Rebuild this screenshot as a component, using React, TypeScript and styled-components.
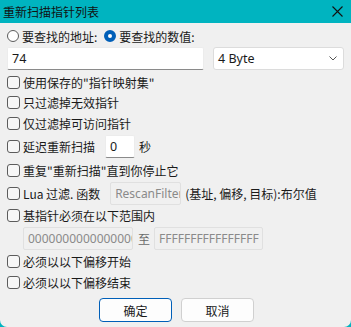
import styled, { createGlobalStyle } from "styled-components";

const GlobalStyle = createGlobalStyle`
  html, body {
    margin: 0;
    padding: 0;
    background: #00b4c0;
  }
  body {
    font-family: "Noto Sans CJK SC", "Noto Sans", sans-serif;
    font-size: 12px;
    color: #1a1a1a;
  }
`;

const Window = styled.div`
  width: 351px;
  height: 327px;
  display: flex;
  flex-direction: column;
  overflow: hidden;
`;

const TitleBar = styled.div`
  height: 23px;
  flex: none;
  display: flex;
  align-items: center;
  justify-content: space-between;
  padding: 0 6px 0 3px;
  background: #00b4c0;
  color: #111;
  font-size: 12px;
`;

const CloseButton = styled.div`
  width: 12px;
  height: 12px;
  display: flex;
  align-items: center;
  justify-content: center;
  margin-right: 2px;
`;

const Body = styled.div`
  flex: 1;
  background: #f0f0f0;
  border-radius: 0 0 7px 7px;
  padding: 5px 7px 0 7px;
  display: flex;
  flex-direction: column;
`;

const Row = styled.div<{ $h?: number; $indent?: number }>`
  display: flex;
  align-items: center;
  flex: none;
  height: ${(p) => p.$h ?? 21}px;
  padding-left: ${(p) => p.$indent ?? 0}px;
  white-space: nowrap;
`;

const RadioCircle = styled.span<{ $on?: boolean }>`
  width: 12px;
  height: 12px;
  border-radius: 50%;
  box-sizing: border-box;
  flex: none;
  margin-right: 3px;
  border: ${(p) => (p.$on ? "4px solid #005fb8" : "1px solid #5c5c5c")};
  background: #fff;
`;

const CheckBox = styled.span`
  width: 13px;
  height: 13px;
  box-sizing: border-box;
  border: 1px solid #5c5c5c;
  border-radius: 3px;
  background: #f7f7f7;
  flex: none;
  margin-right: 3px;
`;

const Label = styled.span<{ $ml?: number; $color?: string }>`
  margin-left: ${(p) => p.$ml ?? 0}px;
  color: ${(p) => p.$color ?? "#1a1a1a"};
`;

const TextInput = styled.div<{ $w: number; $disabled?: boolean }>`
  width: ${(p) => p.$w}px;
  height: 23px;
  box-sizing: border-box;
  flex: none;
  overflow: hidden;
  display: flex;
  align-items: center;
  padding-left: 4px;
  font-family: "Noto Sans", sans-serif;
  font-size: ${(p) => (p.$disabled ? 12 : 12.5)}px;
  color: ${(p) => (p.$disabled ? "#8a8a8a" : "#1a1a1a")};
  background: ${(p) => (p.$disabled ? "#f0f0f0" : "#ffffff")};
  border: 1px solid ${(p) => (p.$disabled ? "#e0e0e0" : "#ececec")};
  border-bottom-color: ${(p) => (p.$disabled ? "#e0e0e0" : "#8a8a8a")};
  border-radius: 2px;
`;

const InputRow = styled.div`
  display: flex;
  justify-content: space-between;
  margin: 3px 0 2px 0;
`;

const Select = styled.div`
  width: 131px;
  height: 23px;
  box-sizing: border-box;
  display: flex;
  align-items: center;
  justify-content: space-between;
  padding: 0 6px 0 4px;
  background: #fff;
  border: 1px solid #dcdcdc;
  border-radius: 3px;
  font-family: "Noto Sans", sans-serif;
  font-size: 12.5px;
`;

const Buttons = styled.div`
  display: flex;
  gap: 9px;
  margin-top: 7.5px;
  padding-left: 92px;
`;

const Button = styled.div<{ $primary?: boolean }>`
  width: 73px;
  height: 24px;
  box-sizing: border-box;
  display: flex;
  align-items: center;
  justify-content: center;
  background: #fdfdfd;
  border: 1px solid ${(p) => (p.$primary ? "#005fb8" : "#d0d0d0")};
  border-radius: 4px;
  font-size: 12px;
`;

const checks = [
  '使用保存的"指针映射集"',
  "只过滤掉无效指针",
  "仅过滤掉可访问指针",
];

export default function App() {
  return (
    <>
      <GlobalStyle />
      <Window>
        <TitleBar>
          <span>重新扫描指针列表</span>
          <CloseButton>
            <svg width="11" height="11" viewBox="0 0 11 11">
              <path d="M0.5 0.5 L10.5 10.5 M10.5 0.5 L0.5 10.5" stroke="#111" strokeWidth="1.1" />
            </svg>
          </CloseButton>
        </TitleBar>
        <Body>
          <Row $h={16}>
            <RadioCircle />
            <Label>要查找的地址:</Label>
            <RadioCircle $on style={{ marginLeft: 7 }} />
            <Label>要查找的数值:</Label>
          </Row>
          <InputRow>
            <TextInput $w={197}>74</TextInput>
            <Select>
              <span>4 Byte</span>
              <svg width="8" height="5" viewBox="0 0 8 5">
                <path d="M0.5 0.5 L4 4 L7.5 0.5" stroke="#555" fill="none" strokeWidth="1" />
              </svg>
            </Select>
          </InputRow>
          {checks.map((c) => (
            <Row key={c} $h={20.5}>
              <CheckBox />
              <Label>{c}</Label>
            </Row>
          ))}
          <Row $h={26}>
            <CheckBox />
            <Label>延迟重新扫描</Label>
            <TextInput $w={30} style={{ marginLeft: 10 }}>0</TextInput>
            <Label $ml={4}>秒</Label>
          </Row>
          <Row $h={22}>
            <CheckBox />
            <Label>重复"重新扫描"直到你停止它</Label>
          </Row>
          <Row $h={23}>
            <CheckBox />
            <Label>Lua 过滤. 函数</Label>
            <TextInput $w={71} $disabled style={{ marginLeft: 10 }}>
              RescanFilter
            </TextInput>
            <Label $ml={4}>(基址, 偏移, 目标):布尔值</Label>
          </Row>
          <Row $h={22}>
            <CheckBox />
            <Label>基指针必须在以下范围内</Label>
          </Row>
          <Row $h={23} $indent={16}>
            <TextInput $w={110} $disabled>0000000000000000</TextInput>
            <Label $ml={5} $color="#6a6a6a">至</Label>
            <TextInput $w={109} $disabled style={{ marginLeft: 4 }}>
              FFFFFFFFFFFFFFFF
            </TextInput>
          </Row>
          <Row $h={24}>
            <CheckBox />
            <Label>必须以以下偏移开始</Label>
          </Row>
          <Row $h={17}>
            <CheckBox />
            <Label>必须以以下偏移结束</Label>
          </Row>
          <Buttons>
            <Button $primary>确定</Button>
            <Button>取消</Button>
          </Buttons>
        </Body>
      </Window>
    </>
  );
}
